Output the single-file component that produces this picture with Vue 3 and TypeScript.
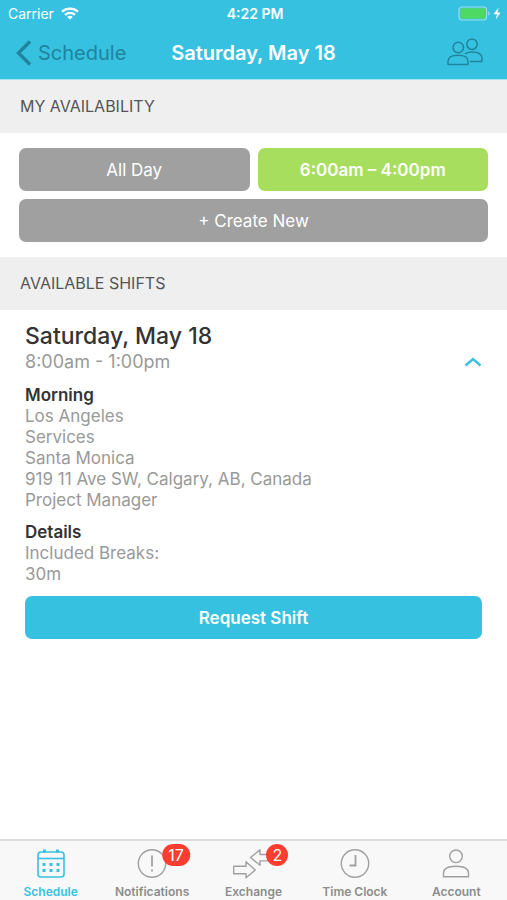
<script setup lang="ts">
import { ref } from 'vue'

interface Tab {
  id: string
  label: string
  badge?: number
}

const slots = ref<string[]>(['All Day', '6:00am – 4:00pm'])
const selectedSlot = ref<string>('6:00am – 4:00pm')
const expanded = ref<boolean>(true)
const activeTab = ref<string>('schedule')

const shift = {
  date: 'Saturday, May 18',
  time: '8:00am - 1:00pm',
  name: 'Morning',
  lines: [
    'Los Angeles',
    'Services',
    'Santa Monica',
    '919 11 Ave SW, Calgary, AB, Canada',
    'Project Manager',
  ],
  details: ['Included Breaks:', '30m'],
}

const tabs: Tab[] = [
  { id: 'schedule', label: 'Schedule' },
  { id: 'notifications', label: 'Notifications', badge: 17 },
  { id: 'exchange', label: 'Exchange', badge: 2 },
  { id: 'clock', label: 'Time Clock' },
  { id: 'account', label: 'Account' },
]
</script>

<template>
  <div class="screen">
    <header class="top">
      <div class="status">
        <div class="carrier">
          <span>Carrier</span>
          <svg width="18" height="13" viewBox="0 0 18 13" aria-hidden="true">
            <g fill="none" stroke="#fff" stroke-width="2.3">
              <path d="M1 4.7C5.4 0.6 12.6 0.6 17 4.7" />
              <path d="M4 7.9C6.8 5.3 11.2 5.3 14 7.9" />
            </g>
            <path d="M9 12.6L6.2 9.9C7.7 8.5 10.3 8.5 11.8 9.9Z" fill="#fff" />
          </svg>
        </div>
        <span class="time">4:22 PM</span>
        <div class="power">
          <svg width="44" height="15" viewBox="0 0 44 15" aria-hidden="true">
            <rect x="1" y="1" width="27.500" height="13" rx="3" fill="none" stroke="#9be0f0" stroke-width="1.200" />
            <rect x="2.300" y="2.300" width="25" height="10.400" rx="1.500" fill="#4cd964" />
            <path d="M30.300 5.500C32 6 32 9 30.300 9.500Z" fill="#9be0f0" />
            <path d="M40.600 1.500L35.600 8.200H39L37.800 13.600L42.600 6.600H39.400Z" fill="#fff" />
          </svg>
        </div>
      </div>
      <nav class="nav">
        <a class="back" href="#schedule">
          <svg width="16" height="26" viewBox="0 0 16 26" aria-hidden="true">
            <path d="M14 1.500L2.500 13L14 24.500" fill="none" stroke="currentColor" stroke-width="3.400" />
          </svg>
          <span>Schedule</span>
        </a>
        <h1>Saturday, May 18</h1>
        <button class="people" type="button" aria-label="Coworkers">
          <svg width="36" height="28" viewBox="0 0 36 28" aria-hidden="true">
            <g fill="none" stroke="currentColor" stroke-width="1.500" stroke-linejoin="round" stroke-linecap="round">
              <circle cx="11.300" cy="9.500" r="5.200" />
              <circle cx="25" cy="6.200" r="5.200" />
              <path d="M1 26.500V23.500C1 19.500 4.500 17.300 11 17.300S21 19.500 21 23.500V26.500Z" />
              <path d="M18.500 15.600C20.200 14.400 22.500 14 25 14C31.500 14 35 16.400 35 20.300V23.500H23.500" />
            </g>
          </svg>
        </button>
      </nav>
    </header>

    <main>
      <section>
        <h2 class="heading">MY AVAILABILITY</h2>
        <div class="slots">
          <button
            v-for="slot in slots"
            :key="slot"
            type="button"
            class="btn"
            :class="{ selected: slot === selectedSlot }"
            :aria-pressed="slot === selectedSlot"
            @click="selectedSlot = slot"
          >{{ slot }}</button>
          <button type="button" class="btn wide">+ Create New</button>
        </div>
      </section>

      <section>
        <h2 class="heading">AVAILABLE SHIFTS</h2>
        <article class="shift">
          <div class="summary">
            <div>
              <h3>{{ shift.date }}</h3>
              <p class="hours">{{ shift.time }}</p>
            </div>
            <button class="toggle" type="button" aria-label="Toggle shift" :aria-expanded="expanded" @click="expanded = !expanded">
              <svg width="18" height="10" viewBox="0 0 18 10" :class="{ flipped: !expanded }" aria-hidden="true">
                <path d="M1.500 8.500L9 2L16.500 8.500" fill="none" stroke="currentColor" stroke-width="2.400" />
              </svg>
            </button>
          </div>
          <template v-if="expanded">
            <div class="block">
              <h4>{{ shift.name }}</h4>
              <p v-for="line in shift.lines" :key="line">{{ line }}</p>
            </div>
            <div class="block">
              <h4>Details</h4>
              <p v-for="line in shift.details" :key="line">{{ line }}</p>
            </div>
            <button type="button" class="btn request">Request Shift</button>
          </template>
        </article>
      </section>
    </main>

    <nav class="tabs">
      <a
        v-for="tab in tabs"
        :key="tab.id"
        :href="'#' + tab.id"
        :class="{ active: tab.id === activeTab }"
        @click.prevent="activeTab = tab.id"
      >
        <span class="icon">
          <svg width="40" height="32" viewBox="0 0 40 32" aria-hidden="true">
            <g fill="none" stroke="currentColor" stroke-width="1.400" stroke-linejoin="round">
              <template v-if="tab.id === 'schedule'">
                <rect x="7" y="4" width="26" height="25" rx="3" stroke-width="1.600" />
                <path d="M7 10.500H33" stroke-width="1.600" />
                <path d="M13.500 1.500V4.500M26.500 1.500V4.500" stroke-width="3" />
                <path d="M11.500 16.500H28.500M11.500 22.500H28.500" stroke-width="3" stroke-dasharray="3 4" />
              </template>
              <template v-else-if="tab.id === 'notifications'">
                <circle cx="20" cy="15.500" r="13.700" />
                <path d="M20 7.500V18.500" stroke-width="1.800" />
                <path d="M20 21.500V23.500" stroke-width="1.800" />
              </template>
              <template v-else-if="tab.id === 'exchange'">
                <path d="M0.700 18.300H13V13.800L22.300 22L13 29.700V25.700H0.700Z" />
                <path d="M38 6.500H27V1.800L17.500 9.500L27 17.300V12.900H38Z" />
              </template>
              <template v-else-if="tab.id === 'clock'">
                <circle cx="20" cy="15.500" r="13.700" />
                <path d="M20.500 7V17.500H14.500" stroke-width="1.800" stroke-linejoin="miter" />
              </template>
              <template v-else>
                <circle cx="20" cy="8.300" r="6.300" />
                <path d="M7.500 28.700V25C7.500 20.500 12 18.200 20 18.200S32.500 20.500 32.500 25V28.700Z" />
              </template>
            </g>
          </svg>
          <span v-if="tab.badge" class="badge">{{ tab.badge }}</span>
        </span>
        <span class="label">{{ tab.label }}</span>
      </a>
    </nav>
  </div>
</template>

<style>
body {
  margin: 0;
  background: #fff;
}
</style>

<style scoped>
* {
  box-sizing: border-box;
}

.screen {
  display: flex;
  flex-direction: column;
  min-height: 100vh;
  font-family: Inter, "Liberation Sans", sans-serif;
  color: #999;
}

h1,
h2,
h3,
h4,
p {
  margin: 0;
}

button {
  border: 0;
  padding: 0;
  background: none;
  font: inherit;
  cursor: pointer;
}

a {
  text-decoration: none;
}

svg {
  display: block;
}

.top {
  background: #37c1e0;
  color: #fff;
  border-bottom: 1px solid #a5e3f1;
}

.status {
  display: grid;
  grid-template-columns: 1fr auto 1fr;
  align-items: center;
  height: 27px;
  padding: 0 5px 0 8px;
  font-size: 14px;
}

.carrier {
  display: flex;
  align-items: center;
  gap: 7px;
}

.time {
  font-weight: 600;
}

.power {
  display: flex;
  justify-content: flex-end;
}

.nav {
  display: grid;
  grid-template-columns: 1fr auto 1fr;
  align-items: center;
  height: 52px;
  padding: 0 16px;
}

.back {
  display: flex;
  align-items: center;
  gap: 6px;
  color: #20849c;
  font-size: 20px;
}

h1 {
  font-size: 20px;
  font-weight: 600;
}

.people {
  justify-self: end;
  padding: 0 8px 2px 0;
  color: #20849c;
}

.heading {
  padding: 16px 20px;
  background: #efefef;
  color: #555;
  font-size: 16px;
  font-weight: 400;
  line-height: 21px;
}

.slots {
  display: grid;
  grid-template-columns: 1fr 1fr;
  gap: 8px;
  padding: 15px 19px;
}

.btn {
  height: 43px;
  border-radius: 7px;
  background: #a0a0a0;
  color: #fff;
  font-size: 17px;
}

.selected {
  background: #a7de5d;
  font-weight: 600;
}

.wide {
  grid-column: 1 / -1;
}

.shift {
  padding: 12px 25px;
}

.summary {
  display: flex;
  justify-content: space-between;
  align-items: flex-end;
}

h3 {
  color: #333;
  font-size: 23px;
  font-weight: 500;
  line-height: 28px;
}

.hours {
  font-size: 18px;
  line-height: 24px;
}

.toggle {
  padding: 7px 0;
  color: #37c1e0;
}

.flipped {
  transform: rotate(180deg);
}

.block {
  padding-top: 11px;
  font-size: 17px;
  line-height: 21px;
}

h4 {
  color: #333;
  font-size: 17px;
  font-weight: 600;
}

.request {
  width: 100%;
  margin-top: 11px;
  background: #37c1e0;
  font-weight: 600;
}

.tabs {
  display: grid;
  grid-template-columns: repeat(5, 1fr);
  margin-top: auto;
  border-top: 2px solid #dcdcdc;
  background: #f8f8f8;
}

.tabs a {
  display: flex;
  flex-direction: column;
  align-items: center;
  gap: 4px;
  padding: 7px 0 1px;
  color: #a0a0a0;
}

.tabs a.active {
  color: #37c1e0;
}

.icon {
  position: relative;
}

.label {
  color: #8c8c8c;
  font-size: 12px;
  font-weight: 600;
  line-height: 15px;
}

.active .label {
  color: #37c1e0;
}

.badge {
  position: absolute;
  top: -4px;
  left: 44px;
  min-width: 22px;
  height: 22px;
  padding: 0 6px;
  border-radius: 11px;
  background: #fc3d30;
  color: #fff;
  font-size: 16px;
  line-height: 22px;
  text-align: center;
  transform: translateX(-50%);
}
</style>
